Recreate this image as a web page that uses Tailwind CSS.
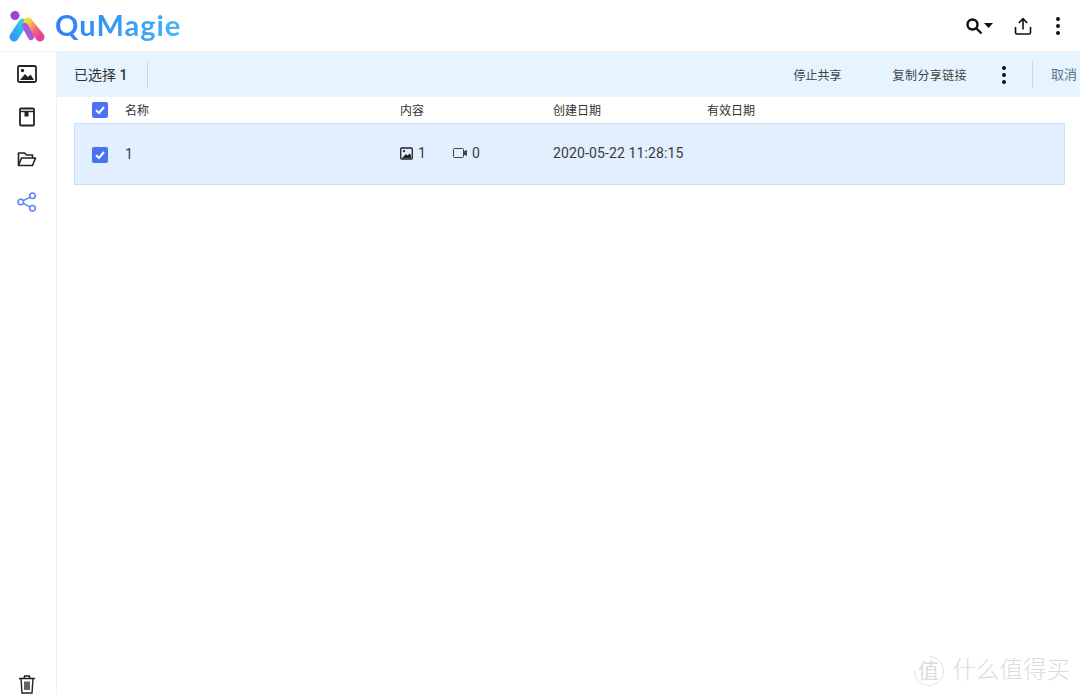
<!DOCTYPE html>
<html lang="en">
<head>
    <meta charset="UTF-8" />
    <title>QuMagie</title>
    <script src="https://cdn.jsdelivr.net/npm/@tailwindcss/browser@4"></script>
</head>
<body class="relative h-[695px] w-[1080px] overflow-hidden bg-white font-['Roboto','Noto_Sans_CJK_SC',sans-serif] text-[#2b2b2b]">
    <!-- Header -->
    <header class="flex h-[52px] items-center justify-between border-b border-[#f3f3f3]">
        <div class="flex items-center pl-[9px]">
            <svg class="h-[32px] w-[37px]" viewBox="0 0 37 32" fill="none">
                <defs>
                    <linearGradient id="l1" x1="0" y1="1" x2="1" y2="0"><stop offset="0" stop-color="#2f9bf5"/><stop offset="1" stop-color="#2fd0e0"/></linearGradient>
                    <linearGradient id="l2" x1="0" y1="0" x2="1" y2="1"><stop offset="0" stop-color="#f7d93a"/><stop offset=".55" stop-color="#f46a7a"/><stop offset="1" stop-color="#e0439a"/></linearGradient>
                </defs>
                <circle cx="6" cy="5.5" r="4.5" fill="#9b45d6"/>
                <path d="M5 27 L14 13" stroke="url(#l1)" stroke-width="9" stroke-linecap="round"/>
                <path d="M19 12 L31 27" stroke="url(#l2)" stroke-width="9" stroke-linecap="round"/>
                <path d="M16 16 L22 27" stroke="#a45be0" stroke-width="6" stroke-linecap="round"/>
            </svg>
            <span class="ml-[9px] bg-gradient-to-r from-[#2f80f5] to-[#45b5f5] bg-clip-text pb-[3px] font-['Lato',sans-serif] text-[29px] leading-none font-bold tracking-[1px] text-transparent">QuMagie</span>
        </div>
        <div class="flex items-center">
            <svg class="h-[18px] w-[18px]" viewBox="0 0 18 18" fill="none" stroke="#111" stroke-width="2.4"><circle cx="7.5" cy="7.5" r="5"/><path d="M11.5 11.5 16.5 16.5"/></svg>
            <svg class="ml-[1px] h-[5px] w-[9px]" viewBox="0 0 9 5"><path d="M0 0h9L4.5 5z" fill="#111"/></svg>
            <svg class="ml-[21px] h-[18px] w-[18px]" viewBox="0 0 18 18" fill="none" stroke="#111" stroke-width="1.6" stroke-linejoin="round"><path d="M1.5 10v5.5a1.5 1.5 0 0 0 1.5 1.5h12a1.5 1.5 0 0 0 1.5-1.5V10"/><path d="M9 12.5V2M4.8 6 9 1.6 13.2 6"/></svg>
            <div class="mr-[20px] ml-[24px] flex flex-col gap-[3px]">
                <span class="size-[4px] rounded-full bg-[#111]"></span>
                <span class="size-[4px] rounded-full bg-[#111]"></span>
                <span class="size-[4px] rounded-full bg-[#111]"></span>
            </div>
        </div>
    </header>

    <div class="flex h-[643px]">
        <!-- Sidebar -->
        <aside class="flex w-[57px] shrink-0 flex-col items-center border-r border-[#f0f0f0] pr-[2px]">
            <svg class="mt-[12px] h-[20px] w-[20px]" viewBox="0 0 20 20" fill="none"><rect x="1" y="2" width="18" height="16" rx="1.5" stroke="#222" stroke-width="1.8"/><circle cx="5.5" cy="6.5" r="1.7" fill="#222"/><path d="M3 16l5-6 3 3 2.5-2.5L17 16z" fill="#222"/></svg>
            <svg class="mt-[23px] h-[20px] w-[20px]" viewBox="0 0 20 20" fill="none"><rect x="3" y="1.5" width="14" height="17" rx="1" stroke="#222" stroke-width="1.8"/><path d="M3 4.5h14" stroke="#222" stroke-width="1.4"/><path d="M7.5 4.5h4v5h-4z" fill="#222"/></svg>
            <svg class="mt-[22px] h-[20px] w-[20px]" viewBox="0 0 20 20" fill="none" stroke="#222" stroke-width="1.6" stroke-linejoin="round"><path d="M1.5 16.5V4h6l2 2h6v3"/><path d="M1.5 16.5 4.5 9h14l-3 7.5z"/></svg>
            <svg class="mt-[23px] h-[20px] w-[20px]" viewBox="0 0 20 20" fill="none" stroke="#5a84f7" stroke-width="1.5"><circle cx="15.5" cy="3.8" r="2.8"/><circle cx="3.8" cy="10" r="2.8"/><circle cx="15.5" cy="16.2" r="2.8"/><path d="M6.3 8.7 13 5.1M6.3 11.3 13 14.9"/></svg>
            <svg class="mt-auto mb-[1px] h-[20px] w-[20px]" viewBox="0 0 20 20" fill="none" stroke="#222" stroke-width="1.4"><path d="M2 4.5h16M7 4.5l.6-2.5h4.8l.6 2.5"/><path d="M4 4.5l1 14.5h10l1-14.5"/><path d="M8 7.5v8.5M10 7.5v8.5M12 7.5v8.5"/></svg>
        </aside>

        <main class="min-w-0 flex-1">
            <!-- Selection toolbar -->
            <div class="flex h-[45px] items-center bg-[#e5f4fe]">
                <span class="ml-[17px] pt-[2px] text-[14px] text-[#333]">已选择 <span class="font-medium">1</span></span>
                <span class="ml-[20px] h-[27px] w-px bg-[#c9d6df]"></span>
                <span class="ml-auto pt-[2px] text-[12px] text-[#444]">停止共享</span>
                <span class="ml-[51px] pt-[2px] text-[12px] tracking-[.4px] text-[#444]">复制分享链接</span>
                <div class="ml-[35px] flex flex-col gap-[3px]">
                    <span class="size-[4px] rounded-full bg-[#111]"></span>
                    <span class="size-[4px] rounded-full bg-[#111]"></span>
                    <span class="size-[4px] rounded-full bg-[#111]"></span>
                </div>
                <span class="ml-[26px] h-[27px] w-px bg-[#c9d6df]"></span>
                <span class="mr-[3px] ml-[18px] text-[13px] whitespace-nowrap text-[#5f7388]">取消</span>
            </div>

            <!-- Table header -->
            <div class="flex h-[26px] items-center text-[12px] text-[#333]">
                <span class="ml-[35px] flex size-[16px] items-center justify-center rounded-[2px] bg-[#4a72f5]">
                    <svg class="size-[12px]" viewBox="0 0 12 12" fill="none" stroke="#fff" stroke-width="2"><path d="M2 6.2 5 9l5-6"/></svg>
                </span>
                <span class="ml-[17px] w-[275px] pt-[2px]">名称</span>
                <span class="w-[153px] pt-[2px]">内容</span>
                <span class="w-[154px] pt-[2px]">创建日期</span>
                <span class="pt-[2px]">有效日期</span>
            </div>

            <!-- Row -->
            <div class="ml-[17px] flex h-[62px] w-[991px] items-center border border-[#c5e0f9] bg-[#e2effe] pt-px text-[14px] text-[#3a3a3a]">
                <span class="ml-[17px] flex size-[16px] items-center justify-center rounded-[2px] bg-[#4a72f5]">
                    <svg class="size-[12px]" viewBox="0 0 12 12" fill="none" stroke="#fff" stroke-width="2"><path d="M2 6.2 5 9l5-6"/></svg>
                </span>
                <span class="ml-[17px] w-[275px]">1</span>
                <div class="flex w-[153px] items-center pb-[3px]">
                    <svg class="size-[13px]" viewBox="0 0 13 13" fill="none"><rect x=".7" y="1" width="11.6" height="11" rx="1" stroke="#222" stroke-width="1.3"/><circle cx="4" cy="4.2" r="1.1" fill="#222"/><path d="M2 11l4-4 1.5 1.5L9.5 6.5 11 8v3z" fill="#222"/></svg>
                    <span class="ml-[5px] w-[35px]">1</span>
                    <svg class="h-[10px] w-[14px]" viewBox="0 0 14 10" fill="none" stroke="#444" stroke-width="1"><rect x=".5" y=".5" width="10" height="9" rx="1"/><path d="M10.5 4 13.4 2.5v5L10.5 6" fill="#444"/></svg>
                    <span class="ml-[5px]">0</span>
                </div>
                <span class="pb-[3px] tracking-[.12px]">2020-05-22 11:28:15</span>
            </div>
        </main>
    </div>

    <!-- Watermark -->
    <div class="absolute right-[10px] bottom-[9px] flex items-center text-[#dcdcdc]">
        <span class="relative flex size-[30px] items-center justify-center text-[21px] leading-none">
            值
            <span class="absolute inset-0 -rotate-45 rounded-full border-[1.5px] border-[#e2e2e2] border-t-transparent"></span>
        </span>
        <span class="ml-[9px] text-[23.5px] leading-none font-light">什么值得买</span>
    </div>
</body>
</html>
